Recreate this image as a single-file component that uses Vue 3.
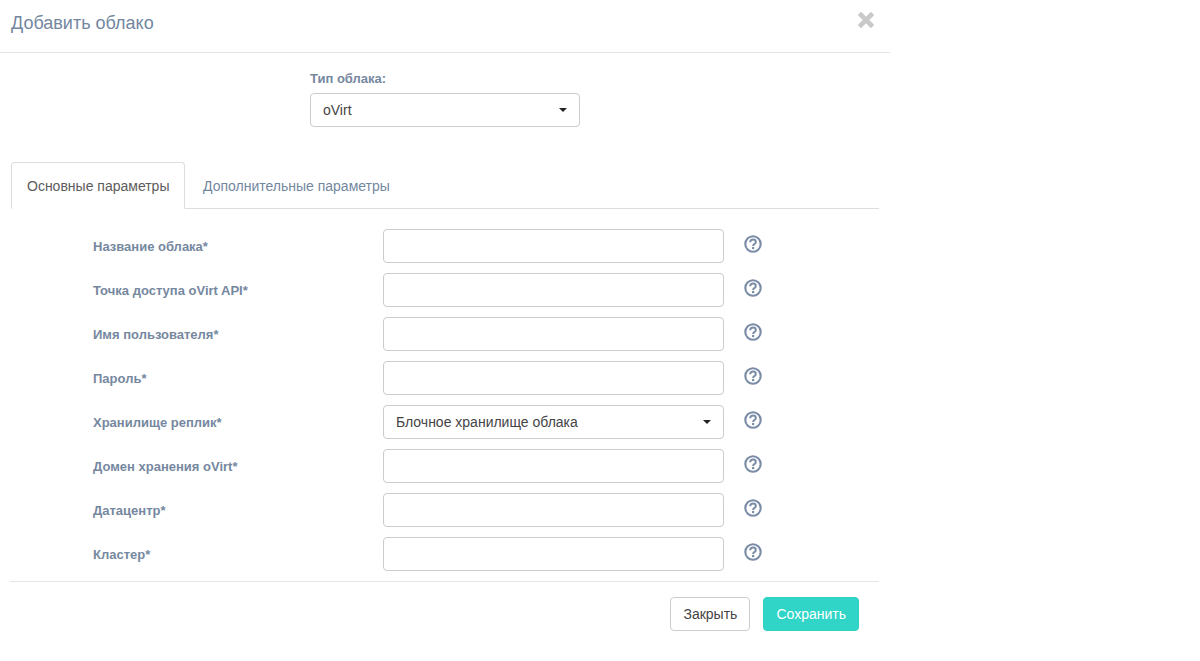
<script setup>
const rows = [
  { label: 'Название облака*' },
  { label: 'Точка доступа oVirt API*' },
  { label: 'Имя пользователя*' },
  { label: 'Пароль*' },
  { label: 'Хранилище реплик*', select: 'Блочное хранилище облака' },
  { label: 'Домен хранения oVirt*' },
  { label: 'Датацентр*' },
  { label: 'Кластер*' },
]
</script>

<template>
  <div class="modal">
    <header class="head">
      <h4 class="title">Добавить облако</h4>
      <svg class="close" viewBox="0 0 16 16" width="16" height="16" aria-label="Закрыть">
        <path d="M3 3 13 13M13 3 3 13" fill="none" stroke="#c9c9c9" stroke-width="4.6" stroke-linecap="square" />
      </svg>
    </header>

    <div class="type">
      <div class="type-label">Тип облака:</div>
      <div class="field type-select">oVirt<span class="caret"></span></div>
    </div>

    <nav class="tabs">
      <div class="tab active">Основные параметры</div>
      <div class="tab">Дополнительные параметры</div>
    </nav>

    <form class="rows" @submit.prevent>
      <div v-for="row in rows" :key="row.label" class="row">
        <label class="row-label">{{ row.label }}</label>
        <div v-if="row.select" class="field row-field">{{ row.select }}<span class="caret"></span></div>
        <input v-else class="field row-field" type="text" />
        <svg class="help" viewBox="0 0 18 18" width="18" height="18">
          <circle cx="9" cy="9" r="7.7" fill="none" stroke="#7a8ca6" stroke-width="2.1" />
          <path d="M6.2 7.2C6.3 5.5 7.5 4.5 9 4.5c1.7 0 2.8 1 2.8 2.4 0 1.1-.6 1.7-1.5 2.3-.8.5-1.2.9-1.2 1.7" fill="none" stroke="#7a8ca6" stroke-width="2" />
          <rect x="8" y="12" width="2.2" height="2.1" fill="#7a8ca6" />
        </svg>
      </div>
    </form>

    <footer class="foot">
      <button class="btn close-btn" type="button">Закрыть</button>
      <button class="btn primary" type="button">Сохранить</button>
    </footer>
  </div>
</template>

<style>
html, body { background: #fff; }
</style>

<style scoped>
.modal {
  width: 890px;
  font-family: "Liberation Sans", Arial, sans-serif;
  font-size: 14px;
  line-height: 20px;
  color: #444;
  background: #fff;
}
.head {
  height: 53px;
  box-sizing: border-box;
  border-bottom: 1px solid #e5e5e5;
  display: flex;
  justify-content: space-between;
  align-items: flex-start;
  padding: 0 16px 0 11px;
}
.title {
  margin: 13px 0 0;
  font-size: 18px;
  font-weight: 400;
  line-height: 20px;
  color: #73879f;
}
.close { margin-top: 12px; }
.type {
  margin: 15px 0 0 310px;
  width: 270px;
}
.type-label {
  font-size: 13px;
  font-weight: 700;
  line-height: 20px;
  color: #76889f;
  margin-bottom: 5px;
  position: relative;
  top: 1px;
}
.field {
  box-sizing: border-box;
  height: 34px;
  border: 1px solid #ccc;
  border-radius: 4px;
  background: #fff;
  padding: 6px 12px;
  font: inherit;
  color: #444;
  display: flex;
  align-items: center;
  justify-content: space-between;
}
.caret {
  width: 0;
  height: 0;
  border-top: 4px solid #222;
  border-left: 4px solid transparent;
  border-right: 4px solid transparent;
}
.tabs {
  margin: 35px 11px 0 11px;
  height: 47px;
  box-sizing: border-box;
  display: flex;
  border-bottom: 1px solid #ddd;
}
.tab {
  box-sizing: border-box;
  height: 47px;
  padding: 13px 16px 0 17px;
  color: #73879f;
  border: 1px solid transparent;
  border-radius: 4px 4px 0 0;
}
.tab.active {
  width: 174px;
  padding: 13px 0 0 15px;
  color: #5c5c5c;
  background: #fff;
  border-color: #ddd #ddd #fff;
}
.rows {
  padding-top: 20px;
  display: flex;
  flex-direction: column;
  gap: 10px;
  height: 373px;
  box-sizing: border-box;
  margin: 0 11px 0 10px;
  border-bottom: 1px solid #e5e5e5;
}
.row {
  display: flex;
  align-items: center;
  height: 34px;
  padding-left: 83px;
}
.row-label {
  width: 290px;
  font-size: 13px;
  font-weight: 700;
  color: #76889f;
  line-height: 20px;
  position: relative;
  top: 1px;
}
.row-field {
  width: 341px;
  outline: none;
}
.help {
  margin-left: 20px;
  position: relative;
  top: -2px;
}
.foot {
  display: flex;
  justify-content: flex-end;
  gap: 13px;
  padding: 15px 31px 0 0;
}
.btn {
  box-sizing: border-box;
  height: 34px;
  padding: 6px 12px;
  border: 1px solid #ccc;
  border-radius: 4px;
  background: #fff;
  color: #444;
  font: inherit;
}
.close-btn {
  width: 80px;
  padding: 6px 0 6px 12px;
  text-align: left;
}
.btn.primary {
  background: #30d5c8;
  border-color: #2dd0c3;
  color: #fff;
}
</style>
